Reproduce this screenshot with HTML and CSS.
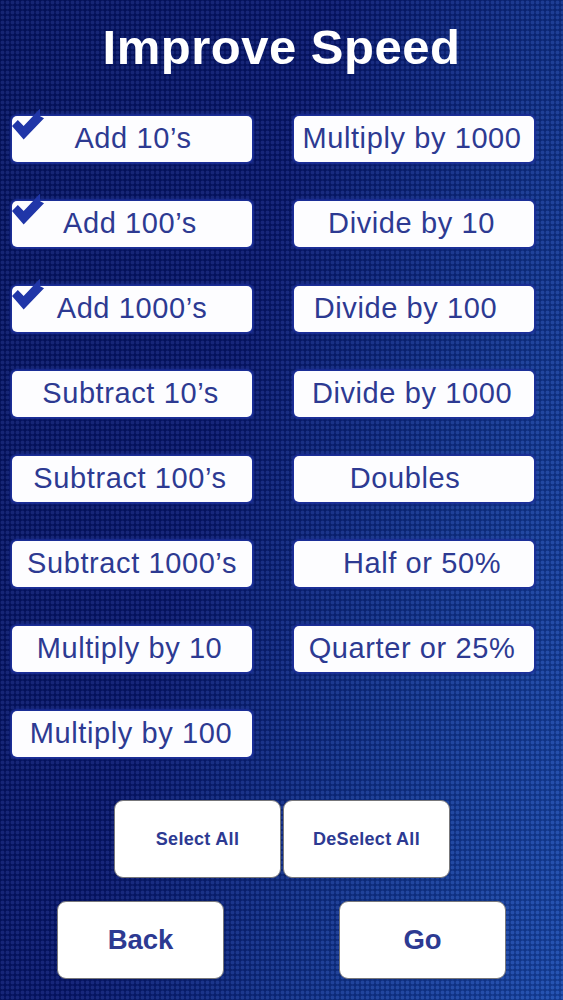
FILE: index.html

```html
<!DOCTYPE html>
<html lang="en">
<head>
    <meta charset="UTF-8">
    <meta name="viewport" content="width=device-width, initial-scale=1.0">
    <title>Improve Speed</title>
    <link rel="stylesheet" href="styles.css">
</head>
<body>
    <div class="screen">
        <h1>Improve Speed</h1>
        <div class="topic-grid">
            <div class="topic push-2">
                <svg class="tick" viewBox="0 0 34 32"><path d="M0 18 L6 12 L12 18 L29 0 L29 8 L33 10 L12 32 Z"/></svg>
                Add 10’s
            </div>
            <div class="topic pull-4">Multiply by 1000</div>
            <div class="topic pull-4">
                <svg class="tick" viewBox="0 0 34 32"><path d="M0 18 L6 12 L12 18 L29 0 L29 8 L33 10 L12 32 Z"/></svg>
                Add 100’s
            </div>
            <div class="topic pull-5">Divide by 10</div>
            <div class="topic">
                <svg class="tick" viewBox="0 0 34 32"><path d="M0 18 L6 12 L12 18 L29 0 L29 8 L33 10 L12 32 Z"/></svg>
                Add 1000’s
            </div>
            <div class="topic pull-17">Divide by 100</div>
            <div class="topic pull-3">Subtract 10’s</div>
            <div class="topic pull-4">Divide by 1000</div>
            <div class="topic pull-4">Subtract 100’s</div>
            <div class="topic pull-18">Doubles</div>
            <div class="topic">Subtract 1000’s</div>
            <div class="topic push-16">Half or 50%</div>
            <div class="topic pull-5">Multiply by 10</div>
            <div class="topic pull-4">Quarter or 25%</div>
            <div class="topic pull-2">Multiply by 100</div>
        </div>
        <div class="select-row">
            <button class="action small">Select All</button>
            <button class="action small">DeSelect All</button>
        </div>
        <div class="nav-row">
            <button class="action">Back</button>
            <button class="action">Go</button>
        </div>
    </div>
</body>
</html>
```

FILE: styles.css

```css
* {
    box-sizing: border-box;
}
html, body {
    margin: 0;
    padding: 0;
}
body {
    width: 563px;
    height: 1000px;
    overflow: hidden;
    font-family: "Liberation Sans", Arial, sans-serif;
    background-color: #0a2478;
    background-image:
        radial-gradient(circle at 2.5px 2.5px, rgba(255, 255, 255, 0.07) 0 1.4px, rgba(0, 0, 20, 0.22) 2.4px),
        linear-gradient(105deg, #041468 0%, #051670 40%, #0f3492 72%, #1748ae 100%);
    background-size: 5px 5px, 100% 100%;
}
.screen {
    height: 1000px;
    padding: 0 30px 0 12px;
    display: flex;
    flex-direction: column;
}
h1 {
    margin: 19px -18px 0 0;
    height: 56px;
    color: #fff;
    font-size: 49px;
    line-height: 56px;
    font-weight: bold;
    text-align: center;
    letter-spacing: 0.5px;
}
.topic-grid {
    margin-top: 41px;
    display: grid;
    grid-template-columns: 240px 240px;
    grid-auto-rows: 46px;
    column-gap: 42px;
    row-gap: 39px;
}
.topic {
    position: relative;
    display: flex;
    align-items: center;
    justify-content: center;
    padding-bottom: 2px;
    border-radius: 5px;
    background: #fdfdff;
    box-shadow: 0 0 2px 2px #1d309a;
    color: #2d3a92;
    font-size: 29px;
    letter-spacing: 0.6px;
    white-space: nowrap;
}
.push-2 { padding-left: 2px; }
.push-16 { padding-left: 16px; }
.pull-2 { padding-right: 2px; }
.pull-3 { padding-right: 3px; }
.pull-4 { padding-right: 4px; }
.pull-5 { padding-right: 5px; }
.pull-17 { padding-right: 17px; }
.pull-18 { padding-right: 18px; }
.tick {
    position: absolute;
    left: 0;
    top: -8px;
    width: 33px;
    height: 32px;
    fill: #2036a8;
}
.select-row {
    margin-top: 43px;
    margin-left: 102px;
    display: flex;
    gap: 2px;
}
.nav-row {
    margin-top: 23px;
    margin-left: 45px;
    display: flex;
    gap: 115px;
}
.action {
    width: 167px;
    height: 78px;
    padding: 0;
    border: 1px solid #77777a;
    border-radius: 9px;
    background: #fff;
    color: #2d3a92;
    font-family: inherit;
    font-size: 27.5px;
    font-weight: bold;
}
.action.small {
    font-size: 18px;
    letter-spacing: 0.3px;
}
```
